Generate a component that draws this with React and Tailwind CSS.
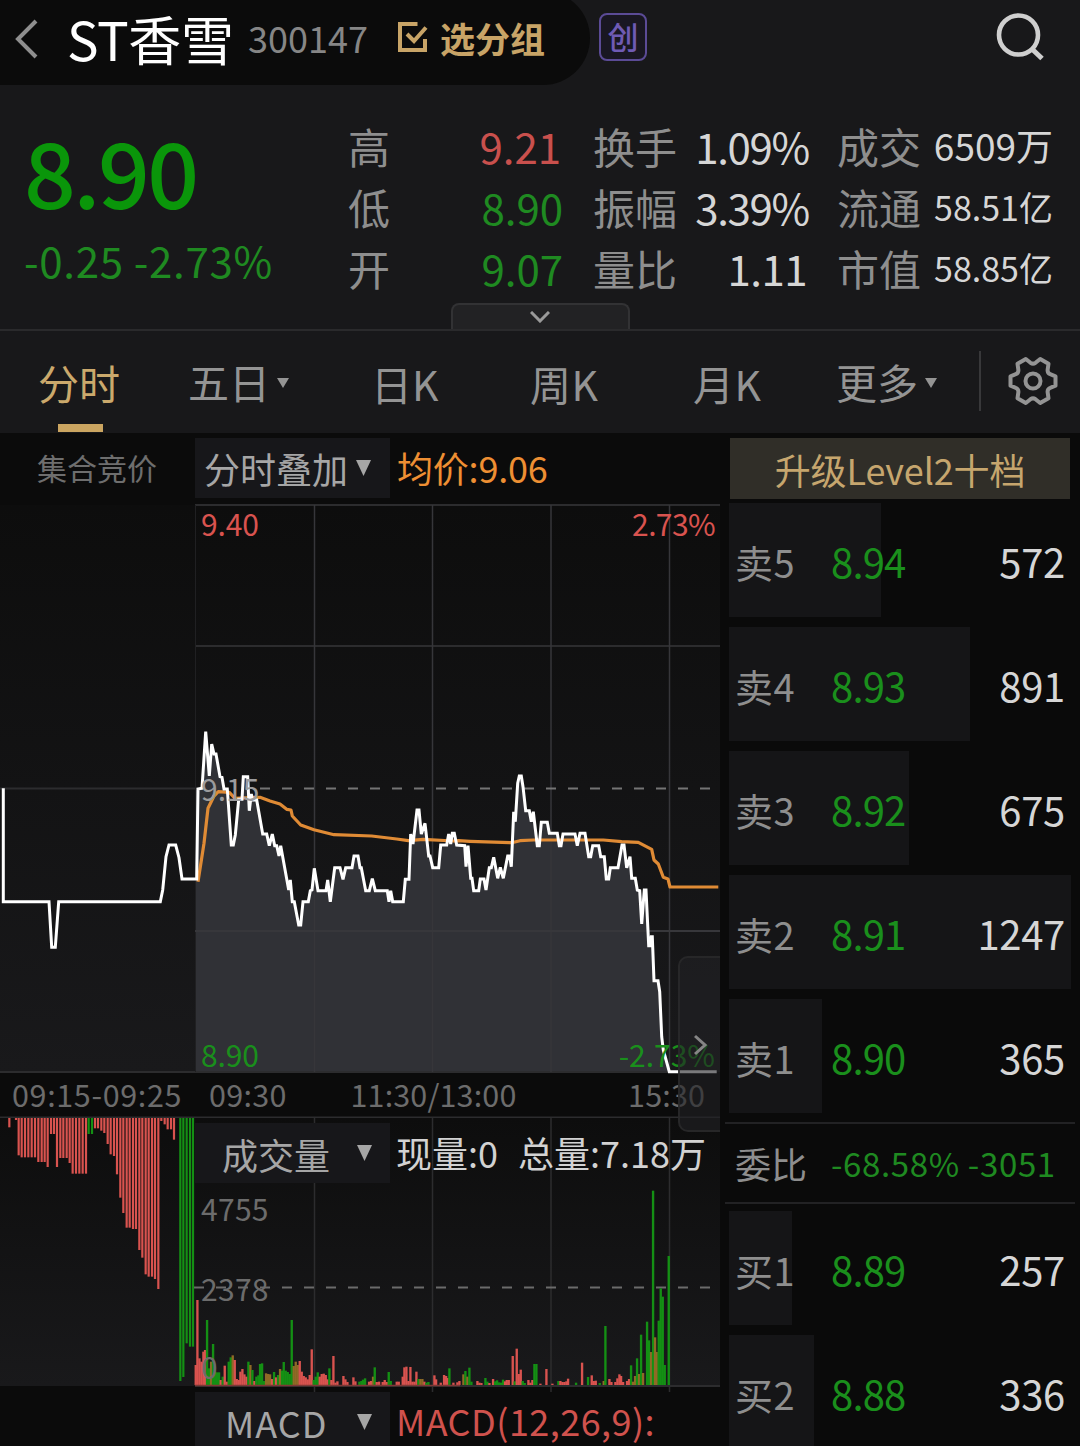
import React from "react";

const RED = "#d9534f";
const GREEN = "#1a8f1c";
const COLORS = { r: "#d9534f", g: "#149014", o: "#8f6a26" };

const toPoints = (list, x0, y0) => list.map(([x, y]) => [x0 + x / 3, y0 + y / 3]);
const join = (pts) => pts.map(([x, y]) => `${x.toFixed(1)},${y.toFixed(1)}`).join(" ");

const auction = toPoints(
  [[10, 85], [10, 425], [147, 425], [155, 562], [166, 562], [176, 425], [481, 425], [488, 390], [498, 290], [507, 255], [527, 255], [537, 293], [546, 357], [590, 357]],
  0, 760
);

const price = [
  ...toPoints([
    [24, 207], [36, 205], [47, 35], [58, 168], [65, 72], [72, 102], [78, 102], [90, 170], [96, 172], [102, 207], [112, 207], [124, 375], [130, 375], [136, 345], [146, 238], [156, 238], [160, 170], [173, 170], [178, 272], [184, 222], [188, 240], [200, 240], [218, 342], [230, 342], [238, 377], [247, 342], [254, 377], [260, 377], [267, 408], [272, 377], [296, 510], [301, 480], [307, 545], [313, 545], [326, 615], [332, 615], [339, 545], [355, 545], [361, 512], [366, 510], [373, 445], [384, 512], [408, 512], [413, 480], [421, 545], [434, 443], [450, 443], [459, 478], [467, 443], [486, 443], [492, 408], [504, 408], [510, 443], [514, 443], [527, 512], [538, 512], [547, 476], [556, 512], [592, 512], [597, 545], [602, 512], [608, 545], [640, 545], [646, 478], [657, 478], [662, 342], [669, 372], [681, 270], [687, 270], [694, 342], [705, 310], [716, 408], [720, 408], [728, 443], [746, 443], [752, 375], [770, 375], [776, 342], [782, 372], [787, 340], [793, 340], [800, 375],
  ], 190, 720),
  ...toPoints([
    [44, 257], [48, 320], [54, 257], [62, 355], [66, 355], [71, 392], [86, 392], [91, 357], [102, 357], [108, 390], [118, 323], [124, 323], [131, 292], [143, 355], [151, 322], [160, 355], [173, 288], [179, 288], [184, 320], [191, 155], [196, 185], [203, 70], [208, 48], [214, 48], [219, 80], [227, 152], [238, 152], [244, 185], [250, 155], [262, 257], [268, 257], [274, 187], [292, 187], [298, 220], [322, 220], [328, 257], [333, 257], [339, 222], [375, 222], [382, 257], [390, 220], [405, 220], [416, 290], [422, 290], [428, 257], [446, 257], [452, 290], [463, 290], [469, 357], [476, 357], [481, 323], [504, 323], [516, 255], [522, 255], [530, 323], [540, 290], [545, 355], [556, 355], [562, 390], [569, 392], [575, 492], [583, 390], [588, 390], [596, 557], [600, 557], [604, 530], [607, 530], [612, 662], [624, 662], [629, 695], [635, 830], [640, 870], [658, 935], [800, 935],
  ], 450, 760),
];

const average = [
  ...toPoints([[24, 485], [42, 370], [54, 265], [72, 228], [85, 215], [118, 217], [135, 235], [210, 232], [240, 243], [270, 252], [290, 268], [303, 270], [307, 288], [332, 315], [372, 329], [432, 344], [545, 348], [620, 357], [655, 362], [700, 358], [790, 363]], 190, 720),
  ...toPoints([[25, 242], [60, 244], [185, 248], [210, 242], [250, 240], [460, 240], [515, 245], [565, 247], [605, 268], [612, 300], [625, 312], [640, 352], [654, 357], [660, 381], [805, 381]], 450, 760),
];

const auctionBars = [
  [28, 172], [48, 150], [56, 256], [65, 262], [75, 262], [85, 262], [95, 262], [105, 262], [115, 276], [125, 276], [134, 276], [143, 291], [153, 192], [162, 192], [171, 291], [181, 264], [190, 264], [200, 264], [209, 279], [218, 311], [228, 311], [238, 311], [248, 311], [258, 311], [266, 192, "g"], [276, 192, "g"], [285, 175], [294, 175], [304, 182], [313, 189], [323, 222], [332, 253], [342, 258], [351, 313], [361, 383], [370, 429], [380, 473], [389, 473], [399, 477], [408, 477], [418, 540], [427, 563], [437, 613], [446, 620], [456, 620], [465, 627], [475, 657], [484, 153], [494, 163], [503, 178], [513, 178], [522, 209], [541, 933, "g"], [550, 921, "g"], [560, 820, "g"], [570, 830, "g"], [579, 830, "g"],
];

const morning = "17,255r 22,60r 28,235r 34,245r 40,215r 45,210r 51,120g 57,265g 63,245o 69,192g 75,275g 81,277g 87,277g 92,300r 98,290g 104,257r 110,305r 116,245g 122,232g 128,226o 134,240r 140,297r 146,300r 151,275r 157,267r 163,283r 169,290r 175,245g 181,255o 187,270g 193,303r 199,290g 205,286g 210,252g 216,250g 222,303g 228,280o 234,282o 240,283o 246,297r 252,276g 258,292r 264,285g 270,267o 276,272g 281,246g 287,272g 293,276g 299,282g 305,120g 311,258o 317,245o 323,255o 329,243r 335,275r 341,288r 347,292r 353,298r 359,285r 365,208r 371,300g 377,290g 383,277g 389,290r 395,282r 401,281r 407,285r 412,298r 418,265g 424,300r 430,228r 436,308r 442,304r 460,288r 466,298r 472,306r 490,292r 496,304r 508,305g 514,303g 519,299g 525,295g 537,305r 543,303r 549,290o 554,262g 560,306r 567,305r 578,306r 584,300r 590,306r 596,276g 602,303g 620,305r 626,305r 638,290r 643,262r 649,260r 655,303r 661,261r 667,305r 673,305r 679,275r 685,297g 691,297o 697,297o 703,305r 709,308g 715,306g 733,286r 738,298r";
const afternoon = "2,608r 12,585r 18,588r 22,594r 28,565g 40,608r 52,607r 58,603r 70,583o 76,573g 82,590o 88,563g 94,605g 112,603r 118,608r 124,609r 136,594g 142,605g 148,609r 159,597r 165,604g 171,601g 177,607g 183,608g 189,599g 195,604r 200,600r 206,600r 218,528r 224,604g 230,506r 236,582r 242,569r 248,603g 254,609g 265,600r 271,608r 277,600r 283,552g 289,552g 301,611r 319,567r 337,611r 355,603g 361,603r 367,606r 373,606r 379,604r 384,596r 408,608g 426,548r 444,591g 455,586r 461,603r 467,602r 479,609g 491,603o 496,438g 508,597r 514,606r 526,606r 532,595r 538,583r 543,588r 549,606r 561,603r 567,597r 573,556g 579,605o 585,588o 591,535g 597,582o 603,464g 609,579o 621,425g 627,481g 633,516o 639,32g 645,472o 650,516o 656,422g 662,325g 668,350g 674,555g 686,228g";
const parseBars = (text, x0, y0) =>
  text.split(" ").map((s) => {
    const [x, y] = s.slice(0, -1).split(",").map(Number);
    return [x0 + x / 3, y0 + y / 3, s.slice(-1)];
  });
const bars = [...parseBars(morning, 190, 1280), ...parseBars(afternoon, 440, 1180)];

const stats = [
  ["高", "9.21", "pr-[3px] text-[#c9504d]", "换手", "1.09%", "tracking-[-1.3px]", "成交", "6509万", "text-[37px]"],
  ["低", "8.90", "pr-[1px] text-[#1f8a21]", "振幅", "3.39%", "tracking-[-1.3px]", "流通", "58.51亿", "text-[34px]"],
  ["开", "9.07", "pr-[1px] text-[#1f8a21]", "量比", "1.11", "pr-[2px] tracking-[-0.500px]", "市值", "58.85亿", "text-[34px]"],
];

const asks = [
  ["卖5", "8.94", "572", "w-[152px]"],
  ["卖4", "8.93", "891", "w-[241px]"],
  ["卖3", "8.92", "675", "w-[180px]"],
  ["卖2", "8.91", "1247", "w-[342px]"],
  ["卖1", "8.90", "365", "w-[93px]"],
];
const bids = [
  ["买1", "8.89", "257", "w-[63px]"],
  ["买2", "8.88", "336", "w-[85px]"],
];

function Caret({ className }) {
  return (
    <svg viewBox="0 0 12 10" preserveAspectRatio="none" className={className} fill="currentColor">
      <path d="M0 0H12L6 10Z" />
    </svg>
  );
}

function Header() {
  return (
    <header className="flex h-[85px] items-start">
      <div className="-mt-[9px] flex h-[94px] w-[590px] items-start rounded-r-[47px] bg-[#0b0b0b] pt-[9px]">
        <svg viewBox="0 0 24 40" className="ml-[15px] mt-[19px] h-10 w-6 shrink-0" fill="none" stroke="#8f8f8f" strokeWidth="4">
          <path d="M21 2L3 20L21 38" />
        </svg>
        <h1 className="ml-[28px] mt-[12px] w-[181px] text-[53px] font-normal leading-none tracking-[-0.400px] text-white">ST香雪</h1>
        <span className="mt-[19px] w-[149px] text-[36px] leading-none text-[#868686]">300147</span>
        <svg viewBox="0 0 31 32" className="mt-[21px] h-8 w-[31px] shrink-0" fill="none" stroke="#c8a467" strokeWidth="4">
          <path d="M20.500 3H3V29H28V18M10 13L17 20L29 6.500" />
        </svg>
        <span className="ml-[12px] mt-[20px] text-[35px] font-bold leading-none text-[#c8a467]">选分组</span>
      </div>
      <div className="ml-[9px] mt-[13px] flex h-12 w-12 justify-center rounded-[8px] border-2 border-[#5b4b96] bg-[#191722] pt-[5px] text-[31px] font-medium leading-none text-[#6f5bb4]">创</div>
      <svg viewBox="0 0 50 50" className="ml-[348px] mt-[12px] h-[50px] w-[50px]" fill="none" stroke="#cfcfcf" strokeWidth="4.600">
        <circle cx="23.500" cy="23" r="19.500" />
        <path d="M37 37L47 46.500" strokeWidth="5" />
      </svg>
    </header>
  );
}

function Quote() {
  return (
    <section className="flex h-[245px] flex-col">
      <div className="flex h-[218px]">
        <div className="w-[348px] pl-[24px] pt-[39px] leading-none">
          <div className="text-[91px] font-medium leading-none tracking-[-2.500px] text-[#0a960a]">8.90</div>
          <div className="mt-[24px] whitespace-nowrap text-[42px] leading-none tracking-[0.700px] text-[#1f8a21]">-0.25 -2.73%</div>
        </div>
        <div className="pt-[30px]">
          {stats.map(([a, av, ac, b, bv, bc, c, cv, cs]) => (
            <div key={a} className="flex h-[61px] items-center text-[42px] leading-none text-[#8e8e8e]">
              <span className="w-[109px]">{a}</span>
              <span className={`w-[107px] text-right ${ac}`}>{av}</span>
              <span className="ml-[29px] w-[94px]">{b}</span>
              <span className={`w-[122px] text-right text-[#d6d6d6] ${bc}`}>{bv}</span>
              <span className="ml-[28px] w-[90px]">{c}</span>
              <span className={`w-[126px] whitespace-nowrap text-right text-[#d6d6d6] ${cs}`}>{cv}</span>
            </div>
          ))}
        </div>
      </div>
      <div className="mx-auto flex h-[27px] w-[179px] justify-center rounded-t-[8px] border-2 border-b-0 border-[#323234] bg-[#222224] pt-[6px]">
        <svg viewBox="0 0 20 12" className="h-3 w-5" fill="none" stroke="#9a9a9a" strokeWidth="3">
          <path d="M1 1L10 10L19 1" />
        </svg>
      </div>
    </section>
  );
}

function Tabs() {
  return (
    <nav className="-mt-px flex h-[103px] border-t-2 border-[#2a2a2c] text-[41px] leading-none text-[#949494]">
      <div className="ml-[38px] flex w-[150px] flex-col text-[#cba96c]">
        <span className="pt-[31px]">分时</span>
        <i className="ml-[20px] mt-[21px] h-[9px] w-[45px] bg-[#cba561]" />
      </div>
      <div className="flex w-[183px]">
        <span className="pt-[30px]">五日</span>
        <Caret className="ml-[7px] mt-[47px] h-[10px] w-3" />
      </div>
      <span className="w-[159px] pt-[32px]">日K</span>
      <span className="w-[163px] pt-[32px] tracking-[0.500px]">周K</span>
      <span className="w-[143px] pt-[32px] tracking-[0.500px]">月K</span>
      <div className="flex w-[143px]">
        <span className="pt-[30px]">更多</span>
        <Caret className="ml-[7px] mt-[47px] h-[10px] w-3" />
      </div>
      <i className="mt-[20px] h-[60px] w-[2px] bg-[#38383a]" />
      <svg viewBox="0 0 50 50" className="ml-[27px] mt-[25px] h-[50px] w-[50px]" fill="none" stroke="#949494" strokeWidth="4" strokeLinejoin="round">
        <path d="M17.800 3 L22.500 6.800 Q25 8.500 27.500 6.800 L32.200 3 L40.500 7.800 L39.600 14 Q39.500 17.200 42.200 18.200 L47.500 20.300 V29.700 L42.200 31.800 Q39.500 32.800 39.600 36 L40.500 42.200 L32.200 47 L27.500 43.200 Q25 41.500 22.500 43.200 L17.800 47 L9.500 42.200 L10.400 36 Q10.500 32.800 7.800 31.800 L2.500 29.700 V20.300 L7.800 18.200 Q10.500 17.200 10.400 14 L9.500 7.800 Z" />
        <circle cx="25" cy="25" r="7.500" />
      </svg>
    </nav>
  );
}

function PriceChart() {
  const area = `196,1072 196,790 ${join(price)} 669,1072`;
  return (
    <svg viewBox="0 502 720 616" className="block h-[616px] w-[720px]">
      <defs>
        <linearGradient id="panel" x1="0" y1="0" x2="0" y2="1">
          <stop offset="0" stopColor="#0d0d0d" />
          <stop offset="1" stopColor="#19191b" />
        </linearGradient>
      </defs>
      <rect x="0" y="505" width="720" height="567" fill="url(#panel)" />
      <polygon points={area} fill="#303136" />
      <g stroke="#2c2c2e" strokeWidth="2">
        <path d="M195 505H720M195 646H720M0 788.500H197M0 1072H669" />
        <path d="M314.500 505V1072M432.500 505V1072M551 505V1072M669.500 505V1072" stroke="#36363a" strokeWidth="1.500" />
        <path d="M195.500 505V1072" stroke="#202022" strokeWidth="1" />
        <path d="M195 931H720" stroke="#37373b" />
        <path d="M0 1117.500H720" />
      </g>
      <path d="M260 788.500H712" stroke="#747474" strokeWidth="2" strokeDasharray="10 12" />
      <polyline points={join(average)} fill="none" stroke="#e08b35" strokeWidth="3.200" strokeLinejoin="round" />
      <polyline points={join([...auction, ...price])} fill="none" stroke="#fff" strokeWidth="3" />
      <g fontSize="30">
        <text x="201" y="535.500" fill={RED} letterSpacing="-0.1">9.40</text>
        <text x="715" y="535.500" fill={RED} textAnchor="end" letterSpacing="-0.6">2.73%</text>
        <text x="201" y="1066.500" fill={GREEN} letterSpacing="-0.1">8.90</text>
        <text x="715" y="1066.500" fill={GREEN} textAnchor="end">-2.73%</text>
        <text x="201" y="801" fill="#9b9b9d">9.15</text>
      </g>
      <g fontSize="30.500" fill="#6c6c6c">
        <text x="12" y="1107" letterSpacing="0.650">09:15-09:25</text>
        <text x="209" y="1107" letterSpacing="0.300">09:30</text>
        <text x="350.500" y="1107" letterSpacing="0.150">11:30/13:00</text>
        <text x="628" y="1107" letterSpacing="0.200">15:30</text>
      </g>
    </svg>
  );
}

function VolumeChart() {
  return (
    <svg viewBox="0 1118 720 274" className="block h-[274px] w-[720px]">
      <rect x="0" y="1118" width="720" height="268" fill="url(#panel)" />
      <g stroke="#2c2c2e" strokeWidth="1.500">
        <path d="M314.500 1118V1392M432.500 1118V1392M551 1118V1392M669.500 1118V1392" />
        <path d="M195 1386H720" strokeWidth="2" />
      </g>
      <path d="M194 1287.500H712" stroke="#6b6b6b" strokeWidth="2" strokeDasharray="10 12" />
      {auctionBars.map(([x, y, c]) => (
        <rect key={x} x={x / 3 - 1.1} y="1118" width="2.200" height={y / 3 - 48} fill={COLORS[c || "r"]} />
      ))}
      {bars.map(([x, y, c]) => (
        <rect key={x} x={x - 1.1} y={y} width="2.350" height={1385 - y} fill={COLORS[c]} />
      ))}
      <path d="M195 1385.500H460" stroke="#7d3836" strokeWidth="1.500" />
      <g fontSize="30" fill="#6c6c6c" letterSpacing="0.300">
        <text x="201" y="1221">4755</text>
        <text x="201" y="1301">2378</text>
        <text x="201" y="1379">0</text>
      </g>
    </svg>
  );
}

function Charts() {
  return (
    <div className="relative w-[720px] overflow-hidden">
      <div className="flex h-[69px] items-start pt-[5px] leading-none">
        <span className="w-[195px] pl-[37px] pt-[14px] text-[30px] text-[#6e6e6e]">集合竞价</span>
        <div className="flex h-[60px] w-[195px] bg-[#17171a] pl-[9px] text-[36px] text-[#a6a6a6]">
          <span className="pt-[12px]">分时叠加</span>
          <Caret className="ml-[8px] mt-[22px] h-4 w-[15px]" />
        </div>
        <span className="ml-[7px] mt-[11px] text-[36px] tracking-[-0.200px] text-[#ee8f33]">均价:9.06</span>
      </div>
      <PriceChart />
      <VolumeChart />
      <div className="flex h-[54px] leading-none">
        <div className="ml-[195px] flex h-[54px] w-[195px] bg-[#17171a] pl-[30px] text-[36px] text-[#a6a6a6]">
          <span className="w-[132px] pt-[12px] tracking-[1px]">MACD</span>
          <Caret className="mt-[22px] h-4 w-[15px]" />
        </div>
        <span className="ml-[6px] mt-[10px] text-[36px] tracking-[0.450px] text-[#d0524d]">MACD(12,26,9):</span>
      </div>
      <div className="absolute left-[195px] top-[690px] flex h-[60px] items-start leading-none">
        <div className="flex h-[60px] w-[195px] bg-[#17171a] pl-[27px] text-[36px] text-[#a6a6a6]">
          <span className="w-[135px] pt-[13px]">成交量</span>
          <Caret className="mt-[22px] h-4 w-[15px]" />
        </div>
        <span className="ml-[6px] mt-[11px] whitespace-nowrap text-[36px] text-[#d2d2d2]">现量:0</span>
        <span className="ml-[20px] mt-[11px] whitespace-nowrap text-[36px] text-[#d2d2d2]">总量:7.18万</span>
      </div>
      <div className="absolute left-[678px] top-[523px] flex h-[176px] w-[44px] rounded-l-[10px] border-2 border-[#2a2a2c]/80 bg-[#222224]/60 pl-[14px] pt-[76px]">
        <svg viewBox="0 0 13 22" className="h-[22px] w-[13px]" fill="none" stroke="#858585" strokeWidth="3">
          <path d="M1 2L11 11L1 20" />
        </svg>
      </div>
    </div>
  );
}

function Level({ row }) {
  const [label, value, amount, width] = row;
  return (
    <div className="ml-[9px] grid h-[114px] w-[342px] shrink-0">
      <i className={`col-start-1 row-start-1 h-[114px] bg-[#151517] ${width}`} />
      <div className="col-start-1 row-start-1 flex items-center pt-[2px] text-[40px] leading-none">
        <span className="w-[102px] pl-[6px] pt-[2px] text-[38px] tracking-[0.400px] text-[#8e8e8e]">{label}</span>
        <span className="w-[110px] tracking-[-0.800px] text-[#1a8f1c]">{value}</span>
        <span className="w-[124px] text-right tracking-[-0.300px] text-[#d6d6d6]">{amount}</span>
      </div>
    </div>
  );
}

function OrderBook() {
  return (
    <aside className="flex h-[1013px] w-[360px] flex-col overflow-hidden bg-[#0a0a0a] pt-[5px]">
      <div className="ml-[10px] h-[61px] w-[340px] shrink-0 bg-[#302e28] pt-[13px] text-center text-[36px] leading-none tracking-[-0.150px] text-[#c6a66e]">升级Level2十档</div>
      <div className="mt-[4px] flex flex-col gap-[10px]">
        {asks.map((r) => <Level key={r[0]} row={r} />)}
      </div>
      <div className="ml-[5px] mt-[9px] flex h-[82px] w-[350px] shrink-0 items-center border-y-2 border-[#222224] leading-none">
        <span className="w-[106px] pl-[10px] text-[36px] text-[#8e8e8e]">委比</span>
        <span className="whitespace-nowrap text-[33px] tracking-[0.650px] text-[#1f8a21]">-68.58% -3051</span>
      </div>
      <div className="mt-[7px] flex flex-col gap-[10px]">
        {bids.map((r) => <Level key={r[0]} row={r} />)}
      </div>
    </aside>
  );
}

export default function App() {
  return (
    <main className="flex h-[1446px] w-[1080px] flex-col overflow-hidden bg-[#18181a] font-['Noto_Sans_CJK_SC',sans-serif]">
      <Header />
      <Quote />
      <Tabs />
      <div className="mt-px flex h-[1013px] bg-[#0b0b0b]">
        <Charts />
        <OrderBook />
      </div>
    </main>
  );
}
